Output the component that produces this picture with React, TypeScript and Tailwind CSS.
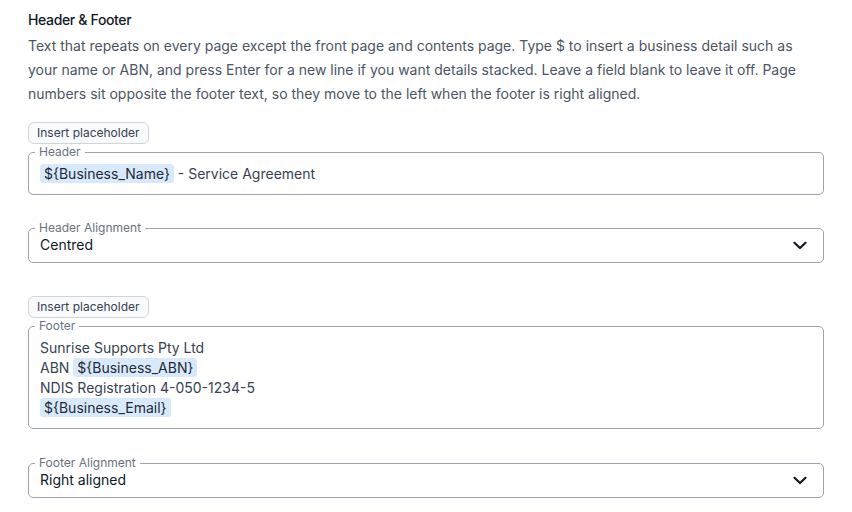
import { ReactNode } from "react";

function Chip({ children }: { children: ReactNode }) {
  return <span className="rounded-[3px] bg-[#d7e9fb] px-1 py-[1px] text-[#1f2937]">{children}</span>;
}

function InsertButton() {
  return (
    <button
      type="button"
      className="flex h-[22px] items-center self-start rounded-md border border-[#d1d5db] bg-[#f9fafb] px-2 text-[12px] leading-4 text-[#374151]"
    >
      Insert placeholder
    </button>
  );
}

function Field({ label, children, className }: { label: string; children: ReactNode; className: string }) {
  return (
    <fieldset className={"rounded-[5px] border border-[#9ca3af] px-[11px] " + className}>
      <legend className="-ml-[5px] px-1 text-[12px] leading-4 text-[#6b7280]">{label}</legend>
      {children}
    </fieldset>
  );
}

function Chevron() {
  return (
    <svg width="14" height="9" viewBox="0 0 14 9" fill="none" className="mr-[5px]">
      <path d="M1.5 1.8 L7 7 L12.5 1.8" stroke="#111827" strokeWidth="2.2" strokeLinecap="round" strokeLinejoin="round" />
    </svg>
  );
}

function SelectField({ label, value }: { label: string; value: string }) {
  return (
    <Field label={label} className="pb-[7px]">
      <div className="-mt-px flex items-center justify-between">
        <span className="text-[14px] leading-5 text-[#111827]">{value}</span>
        <Chevron />
      </div>
    </Field>
  );
}

export default function App() {
  return (
    <div className="flex w-[852px] flex-col bg-white px-7 pt-[10px] font-['Inter',sans-serif]">
      <h2 className="text-[14px] font-medium leading-5 tracking-tight text-[#111827]">Header &amp; Footer</h2>
      <p className="mt-1 text-[14px] leading-6 text-[#4b5563]">
        Text that repeats on every page except the front page and contents page. Type $ to insert a business detail such as
        your name or ABN, and press Enter for a new line if you want details stacked. Leave a field blank to leave it off. Page
        numbers sit opposite the footer text, so they move to the left when the footer is right aligned.
      </p>

      <div className="mt-4 flex flex-col">
        <InsertButton />
        <Field label="Header" className="pb-[10px] pt-[4px]">
          <div className="text-[14px] leading-5 text-[#374151]">
            <Chip>{"${Business_Name}"}</Chip> - Service Agreement
          </div>
        </Field>
      </div>

      <div className="mt-[25px]">
        <SelectField label="Header Alignment" value="Centred" />
      </div>

      <div className="mt-[33px] flex flex-col">
        <InsertButton />
        <Field label="Footer" className="pb-[10px] pt-[4px]">
          <div className="text-[14px] leading-5 text-[#374151]">
            <div>Sunrise Supports Pty Ltd</div>
            <div>
              ABN <Chip>{"${Business_ABN}"}</Chip>
            </div>
            <div>NDIS Registration 4-050-1234-5</div>
            <div>
              <Chip>{"${Business_Email}"}</Chip>
            </div>
          </div>
        </Field>
      </div>

      <div className="mt-[26px] pb-4">
        <SelectField label="Footer Alignment" value="Right aligned" />
      </div>
    </div>
  );
}
